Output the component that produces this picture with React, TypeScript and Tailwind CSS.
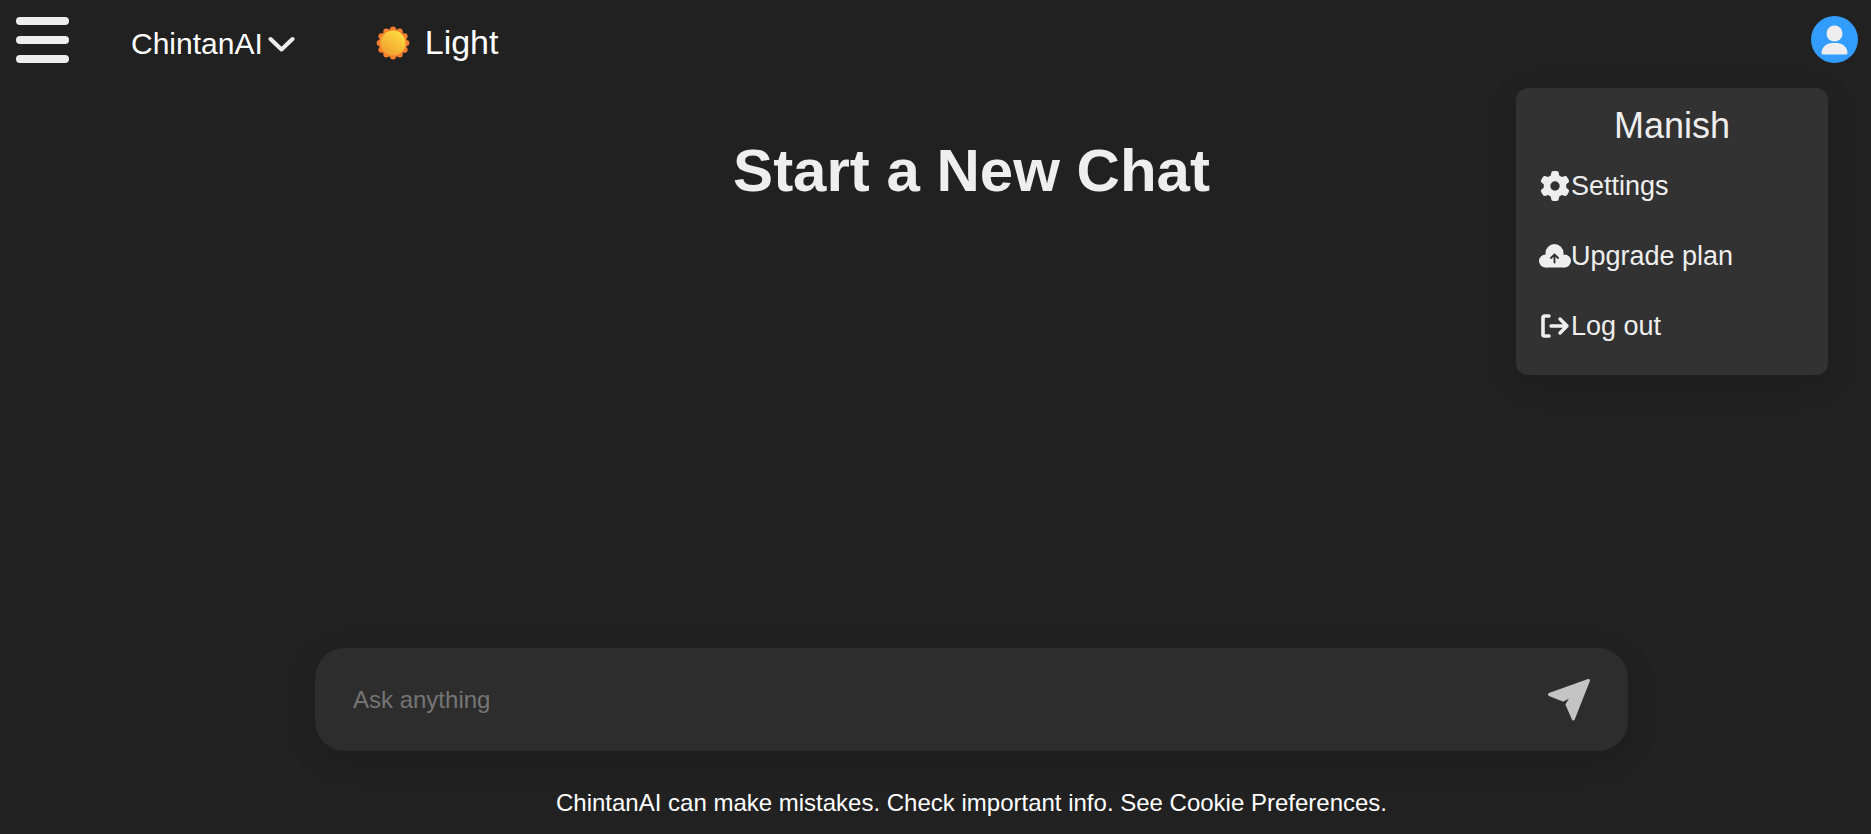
import { FaGear } from "react-icons/fa6";

function Sun() {
  const bumps = Array.from({ length: 12 }, (_, i) => (i * Math.PI) / 6);
  return (
    <svg width="34" height="34" viewBox="0 0 34 34">
      <defs>
        <linearGradient id="sunFill" x1="0.8" y1="0.1" x2="0.2" y2="0.9">
          <stop offset="0" stopColor="#ffdb3f" />
          <stop offset="1" stopColor="#f0a030" />
        </linearGradient>
      </defs>
      {bumps.map((a) => (
        <circle key={a} cx={17 + 13.4 * Math.cos(a)} cy={17 + 13.4 * Math.sin(a)} r="3" fill="#f5812e" />
      ))}
      <circle cx="17" cy="17" r="14" fill="#f5812e" />
      <circle cx="17" cy="17" r="12.5" fill="url(#sunFill)" />
    </svg>
  );
}

function CloudIcon() {
  return (
    <svg width="32" height="24" viewBox="0 0 32 24" fill="#eeeeee">
      <circle cx="15.500" cy="9" r="9" />
      <circle cx="6.500" cy="17" r="6.500" />
      <circle cx="25.500" cy="17" r="6.500" />
      <rect x="6.500" y="12" width="19" height="11.500" />
      <path d="M15.500 18.500V10.500M12 14l3.500-3.500 3.500 3.500" fill="none" stroke="#323232" strokeWidth="1.900" strokeLinecap="round" strokeLinejoin="round" />
    </svg>
  );
}

function LogoutIcon() {
  return (
    <svg width="30" height="26" viewBox="0 0 30 26" fill="none" stroke="#eeeeee" strokeLinecap="round" strokeLinejoin="round">
      <path d="M9 3H4.500A1.500 1.500 0 0 0 3 4.500v17A1.500 1.500 0 0 0 4.500 23H9" strokeWidth="3.600" />
      <path d="M11 13h16M20 6l7 7-7 7" strokeWidth="3.400" />
    </svg>
  );
}

function UserIcon() {
  return (
    <svg width="47" height="47" viewBox="0 0 47 47" fill="#eeeeee">
      <circle cx="23.500" cy="17.500" r="8" />
      <path d="M12 38.500H35a1.500 1.500 0 0 0 1.500-1.500C36.500 31 31 27 26 27H21C16 27 10.500 31 10.500 37a1.500 1.500 0 0 0 1.500 1.500z" />
    </svg>
  );
}

function SendIcon() {
  return (
    <svg width="48" height="48" viewBox="0 0 48 48" fill="#c4c4c4" stroke="#c4c4c4" strokeWidth="3" strokeLinejoin="round">
      <path d="M43.500 4.500 4.500 18.500 18.300 24 28 19 22 28.500 28.300 43z" />
    </svg>
  );
}

function Chevron() {
  return (
    <svg width="27" height="16" viewBox="0 0 27 16" fill="none" stroke="#eeeeee" strokeWidth="4" strokeLinecap="round" strokeLinejoin="round">
      <path d="M2.500 3 13.500 13.500 24.500 3" />
    </svg>
  );
}

function MenuRow({ icon, label }: { icon: React.ReactNode; label: string }) {
  return (
    <div className="flex items-center h-[70px] pl-[22px]">
      <span className="flex w-[33px] justify-center shrink-0">{icon}</span>
      <span>{label}</span>
    </div>
  );
}

export default function App() {
  return (
    <div className="relative h-[834px] overflow-hidden bg-[#212121] text-[#eeeeee] font-['Liberation_Sans',Arial,sans-serif]">
      <header className="flex items-center h-[78px] pl-4 pr-[13px]">
        <div className="flex flex-col gap-[11px] w-[53px] mt-[2px]">
          <span className="h-2 rounded-full bg-[#eeeeee]" />
          <span className="h-2 rounded-full bg-[#eeeeee]" />
          <span className="h-2 rounded-full bg-[#eeeeee]" />
        </div>
        <div className="flex items-center ml-[62px] mt-[8px] text-[30px] text-white">
          ChintanAI
          <span className="ml-[5px] mt-[2px]"><Chevron /></span>
        </div>
        <div className="flex items-center ml-[81px] mt-[7px] gap-[15px] text-[34px] text-white">
          <Sun />
          Light
        </div>
        <div className="ml-auto rounded-full bg-[#339cff]">
          <UserIcon />
        </div>
      </header>

      <div className="absolute left-[1516px] top-[88px] w-[312px] h-[287px] rounded-xl bg-[#323232] text-[27px] shadow-[0_8px_32px_rgba(0,0,0,0.1)]">
        <div className="pt-[17px] text-center text-[36px] leading-[42px]">Manish</div>
        <div className="mt-[4px]">
          <MenuRow icon={<FaGear className="text-[30px]" />} label="Settings" />
          <MenuRow icon={<CloudIcon />} label="Upgrade plan" />
          <MenuRow icon={<LogoutIcon />} label="Log out" />
        </div>
      </div>

      <main className="flex flex-col items-center pl-[72px] h-[673px]">
        <h1 className="mt-[60px] text-[60px] leading-[66px] font-bold text-[#eeeeee]">Start a New Chat</h1>
        <div className="mt-auto flex items-center w-[1313px] h-[103px] rounded-[30px] bg-[#2d2d2d] pl-[38px] pr-[35px] shadow-[0_8px_32px_rgba(0,0,0,0.1)]">
          <span className="text-2xl text-[#757575]">Ask anything</span>
          <span className="ml-auto"><SendIcon /></span>
        </div>
      </main>
      <p className="mt-[38px] pl-[72px] text-center text-[24px] leading-7 text-white">
        ChintanAI can make mistakes. Check important info. See Cookie Preferences.
      </p>
    </div>
  );
}
